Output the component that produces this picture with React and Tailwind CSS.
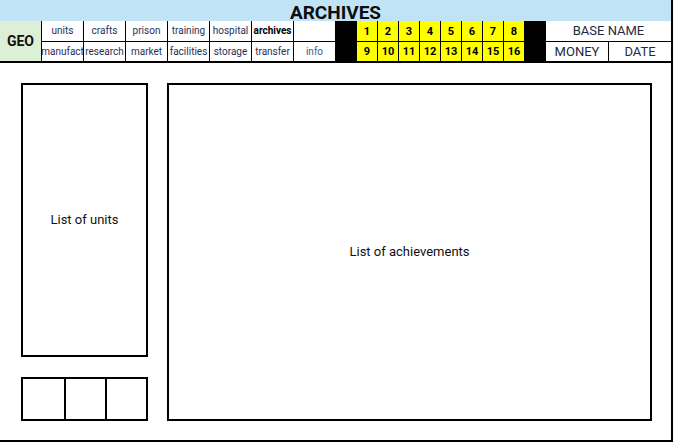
import React from 'react';

const topLinks = ['units', 'crafts', 'prison', 'training', 'hospital', 'archives', ''];
const bottomLinks = ['manufact', 'research', 'market', 'facilities', 'storage', 'transfer', 'info'];
const slotsTop = [1, 2, 3, 4, 5, 6, 7, 8];
const slotsBottom = [9, 10, 11, 12, 13, 14, 15, 16];

const font = { fontFamily: 'Roboto, "Liberation Sans", sans-serif' };

const NavCell = ({ label, row }) => (
    <div
        className={`flex items-center justify-center overflow-hidden whitespace-nowrap border-r border-black bg-white text-[10px] leading-none ${
            row === 1 ? 'border-b' : ''
        } ${label === 'archives' ? 'font-bold text-black' : label === 'info' ? 'text-[#3b5c98]' : 'text-[#1f3057]'}`}
    >
        {label}
    </div>
);

const SlotCell = ({ n, row }) => (
    <div
        className={`flex items-center justify-center border-r border-black bg-[#ffff00] text-[11px] font-bold leading-none text-black ${
            row === 1 ? 'border-b' : ''
        }`}
    >
        {n}
    </div>
);

export default function App() {
    return (
        <div className="h-[442px] w-[673px] overflow-hidden border-b-2 border-r-2 border-black bg-white" style={font}>
            <div className="flex h-[21px] items-start justify-center bg-[#c0e4f5] pt-[3px] text-[19px] font-bold leading-none text-[#0d0d0d]">
                ARCHIVES
            </div>

            <div className="grid grid-cols-[42px_repeat(7,42px)_21px_repeat(8,21px)_21px_63px_62px] grid-rows-[21px_19px] border-b-2 border-black">
                <div className="row-span-2 flex items-center justify-center border-r border-black bg-[#dcf0d5] text-[14px] font-bold text-[#111]">
                    GEO
                </div>
                {topLinks.map((l, i) => (
                    <NavCell key={`t-${i}`} label={l} row={1} />
                ))}
                <div className="row-span-2 bg-black" />
                {slotsTop.map((n) => (
                    <SlotCell key={n} n={n} row={1} />
                ))}
                <div className="row-span-2 bg-black" />
                <div className="col-span-2 flex items-center justify-center border-b border-black text-[13px] text-[#1f2a44]">
                    BASE NAME
                </div>

                {bottomLinks.map((l, i) => (
                    <NavCell key={`b-${i}`} label={l} row={2} />
                ))}
                {slotsBottom.map((n) => (
                    <SlotCell key={n} n={n} row={2} />
                ))}
                <div className="flex items-center justify-center border-r border-black text-[13px] text-[#1f2a44]">
                    MONEY
                </div>
                <div className="flex items-center justify-center text-[13px] text-[#1f2a44]">DATE</div>
            </div>

            <div className="flex gap-[19px] pl-[21px] pt-[20px]">
                <div className="flex w-[127px] flex-col gap-[20px]">
                    <div className="flex h-[274px] items-center justify-center border-2 border-black text-[13px] text-[#111]">
                        List of units
                    </div>
                    <div className="grid h-[44px] grid-cols-3 border-2 border-black">
                        <div />
                        <div className="border-l-2 border-black" />
                        <div className="border-l-2 border-black" />
                    </div>
                </div>
                <div className="flex h-[338px] w-[485px] items-center justify-center border-2 border-black text-[13px] text-[#111]">
                    List of achievements
                </div>
            </div>
        </div>
    );
}
